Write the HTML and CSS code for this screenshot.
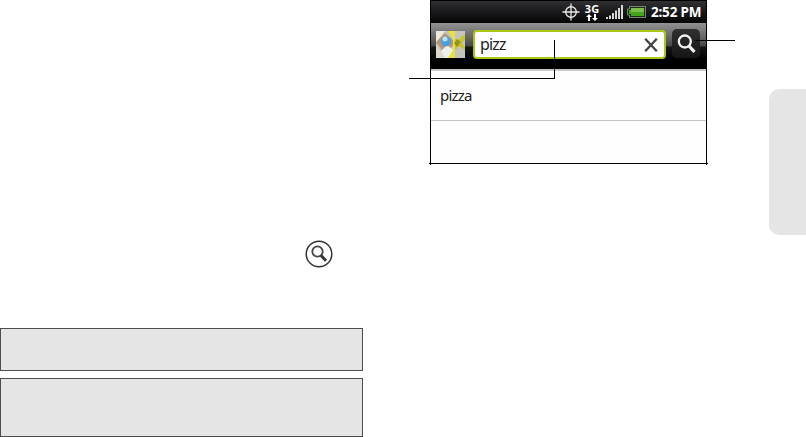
FILE: index.html
```
<!DOCTYPE html>
<html lang="en">
<head>
  <meta charset="UTF-8" />
  <meta name="viewport" content="width=device-width, initial-scale=1.0"/>
  <title>Search Maps</title>
  <link rel="stylesheet" href="styles.css">
</head>
<body>
  <div class="page">
    <div class="left-column">
      <svg class="search-key" width="28" height="28" viewBox="0 0 28 28" fill="none">
        <circle cx="14" cy="14" r="12.8" stroke="#333" stroke-width="1.5"/>
        <circle cx="12.500" cy="11.500" r="5.200" stroke="#444" stroke-width="1.8"/>
        <path d="M16 15.500L21 20.800" stroke="#333" stroke-width="3"/>
      </svg>
      <div class="note"></div>
      <div class="note note-tall"></div>
    </div>

    <div class="phone">
      <div class="status-bar">
        <svg width="18" height="18" viewBox="0 0 18 18" fill="none" stroke="#e8e8e8">
          <circle cx="9" cy="9" r="5.3" stroke-width="1.4"/>
          <path d="M9 .5v17M.5 9h17" stroke-width="1.3"/>
        </svg>
        <div class="network">
          <span>3G</span>
          <svg width="12" height="7" viewBox="0 0 12 7" fill="#fff">
            <path d="M3 0L6 3H4v4H2V3H0zM9 7L6 4h2V0h2v4h2z"/>
          </svg>
        </div>
        <svg class="signal" width="17" height="14" viewBox="0 0 17 14" fill="#d8d8d8">
          <path d="M0 12h2v2H0zM3 10.500h2V14H3zM6 8h2v6H6zM9 5.500h2V14H9zM12 3h2v11h-2zM15 0h2v14h-2z"/>
        </svg>
        <svg class="battery" width="19" height="12" viewBox="0 0 19 12">
          <path d="M2.500 .5h16v11h-16V9H.5V3h2z" fill="#1c2d16" stroke="#7b8477"/>
          <path d="M4 2h13v4H4z" fill="#7dbd4a"/>
          <path d="M2 4h2v2h13v4H4V8H2z" fill="#42a51c"/>
        </svg>
        <span class="clock">2:52 PM</span>
      </div>

      <div class="search-bar">
        <svg class="map-icon" width="29" height="27" viewBox="0 0 29 27">
          <path d="M0 0h29v27H0z" fill="#c5c3bd"/>
          <path d="M0 0h9L0 12z" fill="#eeeae0"/>
          <path d="M0 11L9 2l10 9-9 13z" fill="#b99372"/>
          <path d="M0 14l10 13H0z" fill="#ddd8ce"/>
          <path d="M5 20l6-6 8 6-6 7H9z" fill="#eeeeea"/>
          <path d="M12 0h7v27h-7l5-8V8z" fill="#e6e33c"/>
          <path d="M19 8l3 1 5-5h2v4l-3 4 3 4v3l-6-4-4 4z" fill="#c6c52c"/>
          <path d="M21 8l4 3-4 5-3-4z" fill="#93951f"/>
          <circle cx="10" cy="10.500" r="5" fill="#4b9ee0"/>
          <circle cx="9" cy="8" r="2.500" fill="#b8e2fa"/>
        </svg>
        <div class="search-box">
          <span class="query">pizz</span>
          <svg width="14" height="14" viewBox="0 0 14 14" fill="none">
            <path d="M1.200 .8l11.600 12.400M12.800 .8L1.200 13.200" stroke="#444" stroke-width="2.300"/>
          </svg>
        </div>
        <div class="search-button">
          <svg width="19" height="19" viewBox="0 0 19 19" fill="none" stroke="#f2f2f2">
            <circle cx="7.800" cy="7.500" r="6" stroke-width="2.300"/>
            <path d="M12 12l5.500 5.800" stroke-width="3.200"/>
          </svg>
        </div>
      </div>

      <div class="suggestions">
        <div class="suggestion">pizza</div>
      </div>
    </div>

    <div class="chapter-tab"></div>

    <!-- callout lines and frame corners -->
    <svg class="callouts" width="806" height="437" viewBox="0 0 806 437" fill="none" stroke="#000" shape-rendering="crispEdges">
      <path d="M409 78.500H554.500V40"/>
      <path d="M694 40.500H735"/>
      <path d="M429 163.500h2M430.500 163v2M706 163.500h2M706.500 163v2"/>
    </svg>
  </div>
</body>
</html>
```

FILE: styles.css
```
body {
  margin: 0;
  background: #fff;
  font-family: "Noto Sans", "Open Sans", sans-serif;
}
.page {
  position: relative;
  display: flex;
  align-items: flex-start;
  width: 806px;
  height: 437px;
  overflow: hidden;
}
svg {
  display: block;
  flex: none;
}
.left-column {
  width: 363px;
  height: 437px;
  display: flex;
  flex-direction: column;
  justify-content: flex-end;
}
.search-key {
  align-self: flex-end;
  margin-right: 30px;
  margin-bottom: 60px;
}
.note {
  box-sizing: border-box;
  height: 43px;
  background: #e5e5e5;
  border: 1px solid #4d4d4d;
}
.note-tall {
  height: 59px;
  margin-top: 7px;
}
.phone {
  box-sizing: border-box;
  width: 277px;
  height: 164px;
  margin-left: 67px;
  border: 1px solid #000;
  display: flex;
  flex-direction: column;
}
.status-bar {
  box-sizing: border-box;
  height: 22px;
  padding-right: 4px;
  display: flex;
  align-items: center;
  justify-content: flex-end;
  background: linear-gradient(#303033, #1b1b1d 45%, #050505);
  color: #fff;
}
.network {
  width: 16px;
  margin-left: 4px;
  display: flex;
  flex-direction: column;
  align-items: center;
  font-size: 11px;
  font-weight: bold;
  line-height: 10px;
}
.signal {
  margin-left: 6px;
}
.battery {
  margin-left: 4px;
}
.clock {
  width: 51px;
  margin-left: 5px;
  font-size: 13.5px;
  font-weight: bold;
  line-height: 20px;
  letter-spacing: -0.2px;
  white-space: nowrap;
}
.search-bar {
  box-sizing: border-box;
  height: 46px;
  padding: 6px 6px 0 5px;
  display: flex;
  align-items: flex-start;
  background: linear-gradient(#929292, #606060 35%, #454545 50%, #161616 52%, #000 80%);
}
.map-icon {
  margin-top: 2px;
}
.search-box {
  box-sizing: border-box;
  width: 193px;
  height: 29px;
  margin: 1px 0 0 8px;
  padding: 0 6px 0 5px;
  display: flex;
  align-items: center;
  justify-content: space-between;
  background: #fff;
  border: 2px solid #a9c815;
  border-radius: 4px;
}
.query {
  font-size: 16px;
  line-height: 23px;
  letter-spacing: -0.8px;
  color: #222;
}
.search-button {
  width: 28px;
  height: 29px;
  margin-left: 6px;
  display: flex;
  align-items: center;
  justify-content: center;
  background: linear-gradient(#303030, #151515);
  border-radius: 5px;
}
.suggestions {
  flex: 1;
  border-top: 2px solid #c9c9c7;
  background: #fefefe;
}
.suggestion {
  height: 49px;
  padding-left: 9px;
  border-bottom: 1px solid #c4c4c4;
  font-size: 15px;
  line-height: 49px;
  letter-spacing: -0.8px;
  color: #222;
}
.chapter-tab {
  width: 37px;
  height: 146px;
  margin: 89px 0 0 62px;
  background: #e5e5e5;
  border-radius: 10px 0 0 10px;
}
.callouts {
  position: absolute;
  top: 0;
  left: 0;
}
```
